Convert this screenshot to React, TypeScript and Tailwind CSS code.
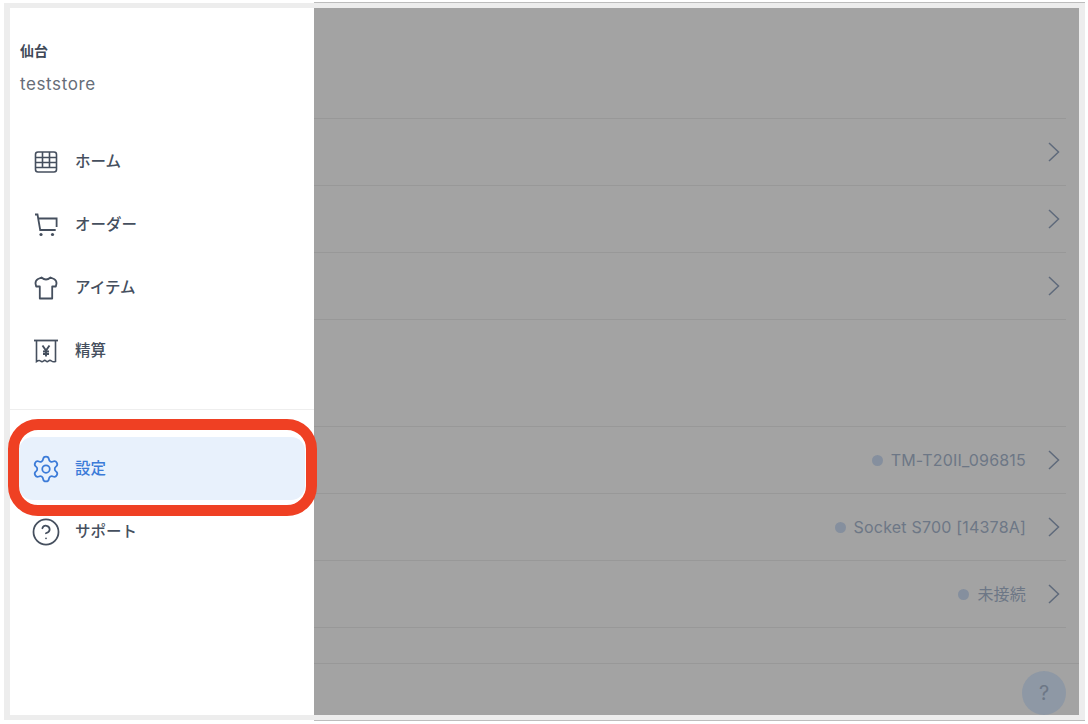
import { CircleHelp, Settings } from 'lucide-react';
import type { ReactNode } from 'react';

const GridIcon = () => (
  <svg width="24" height="24" viewBox="0 0 24 24" fill="none" stroke="currentColor" strokeWidth="1.600">
    <rect x="1.500" y="2" width="21" height="20" rx="2.500" />
    <path d="M1.500 7.500h21M1.500 12.500h21M1.500 17.500h21M8.500 2v15.500M15.500 2v15.500" />
  </svg>
);

const CartIcon = () => (
  <svg width="24" height="24" viewBox="0 0 24 24" fill="none" stroke="currentColor" strokeWidth="1.800">
    <path d="M1 1.500h2.500l2.700 15.500h15.500" />
    <path d="M4.600 5.500h18v8.500" />
    <circle cx="7" cy="21.500" r="1.600" fill="currentColor" stroke="none" />
    <circle cx="18.500" cy="21.500" r="1.600" fill="currentColor" stroke="none" />
  </svg>
);

const ShirtIcon = () => (
  <svg width="24" height="24" viewBox="0 0 24 24" fill="none" stroke="currentColor" strokeWidth="1.800" strokeLinejoin="round">
    <path d="M7.500 1.500 4 3Q1.300 4.500 1.500 7.500L2.200 10.500h3.600v12h12.400v-12h3.600l.7-3Q22.700 4.500 20 3l-3.500-1.500Q12 5.500 7.500 1.500Z" />
  </svg>
);

const ReceiptIcon = () => (
  <svg width="24" height="24" viewBox="0 0 24 24" fill="none" stroke="currentColor" strokeWidth="1.800">
    <path d="M0 1.500h24" />
    <path d="M2.500 1.500v21q2.500-1.800 4-.5t3 0q1.300-1.200 2.500 0t2.500 0q1.500-1.300 3 0t4 .5v-21" strokeWidth="1.600" />
    <path d="m8.500 6.500 3.500 5 3.500-5M12 11.500v6M9 12.500h6M9 15h6" strokeWidth="1.900" />
  </svg>
);

const Chevron = () => (
  <svg width="12" height="20" viewBox="0 0 12 20" fill="none" stroke="currentColor" strokeWidth="1.500" className="ml-[22px] text-[#5f6a7b]">
    <path d="m1 1 9.500 9L1 19" />
  </svg>
);

const items = [
  { label: 'ホーム', icon: <GridIcon /> },
  { label: 'オーダー', icon: <CartIcon /> },
  { label: 'アイテム', icon: <ShirtIcon /> },
  { label: '精算', icon: <ReceiptIcon /> },
];

function NavItem({ label, icon }: { label: string; icon: ReactNode }) {
  return (
    <div className="flex h-[63px] items-center gap-[17px] pl-[24px] text-[#454f5e]">
      <span className="flex w-[24px] justify-center">{icon}</span>
      <span className="text-[15.500px] font-medium">{label}</span>
    </div>
  );
}

function Row({ status }: { status?: string }) {
  return (
    <div className="flex h-[67px] items-center justify-end border-b border-[#989898] pr-[6px] text-[#6d7786]">
      {status && (
        <>
          <span className="h-[11px] w-[11px] rounded-full bg-[#858f9e]" />
          <span className="ml-[8px] text-[16px] tracking-[0.200px]">{status}</span>
        </>
      )}
      <Chevron />
    </div>
  );
}

export default function App() {
  return (
    <div className="h-[724px] w-[1088px] overflow-hidden bg-white pl-[4px] pr-[3px] pt-[2px] font-['Inter','Noto_Sans_CJK_JP',sans-serif]">
      <div className="ml-[310px] h-px bg-[#bdbdbd]" />
      <div className="flex h-[717px] bg-[#ededed] px-[6px] pb-[5px] pt-[5px]">
        <aside className="relative z-10 w-[304px] bg-white">
          <div className="pl-[10px] pt-[33px]">
            <p className="text-[14px] font-semibold leading-[20px] text-[#3f4957]">仙台</p>
            <p className="mt-[13px] text-[17px] leading-[20px] tracking-[0.600px] text-[#666d78]">teststore</p>
          </div>
          <nav className="mt-[36px]">
            {items.map((item) => (
              <NavItem key={item.label} {...item} />
            ))}
          </nav>
          <div className="mt-[27px] h-px bg-[#eeeeee]" />
          <div className="mt-[27px] px-[9px]">
            <div className="relative flex h-[63px] items-center gap-[14px] rounded-[14px] bg-[#e8f1fc] pl-[12px] text-[#3b7bd8]">
              <Settings size={30} strokeWidth={1.400} />
              <span className="text-[15.500px] font-medium">設定</span>
              <div className="absolute -bottom-[16px] -left-[11px] -right-[12px] -top-[18px] rounded-[30px] border-[11px] border-[#ef4023]" />
            </div>
            <div className="flex h-[63px] items-center gap-[14px] pl-[12px] text-[#454f5e]">
              <CircleHelp size={30} strokeWidth={1.400} />
              <span className="text-[15.500px] font-medium">サポート</span>
            </div>
          </div>
        </aside>
        <main className="flex flex-1 flex-col bg-[#a3a3a3]">
          <div className="flex-1 pr-[13px] pt-[110px]">
            <div className="border-t border-[#989898]">
              <Row />
              <Row />
              <Row />
            </div>
            <div className="mt-[106px] border-t border-[#989898]">
              <Row status="TM-T20II_096815" />
              <Row status="Socket S700 [14378A]" />
              <Row status="未接続" />
            </div>
          </div>
          <div className="flex h-[52px] items-end justify-end border-t border-[#989898] pr-[13px]">
            <div className="flex h-[44px] w-[44px] items-center justify-center rounded-full bg-[#8e98a5] text-[20px] text-[#6d7786]">
              ?
            </div>
          </div>
        </main>
      </div>
      <div className="ml-[310px] h-px bg-[#bdbdbd]" />
    </div>
  );
}
